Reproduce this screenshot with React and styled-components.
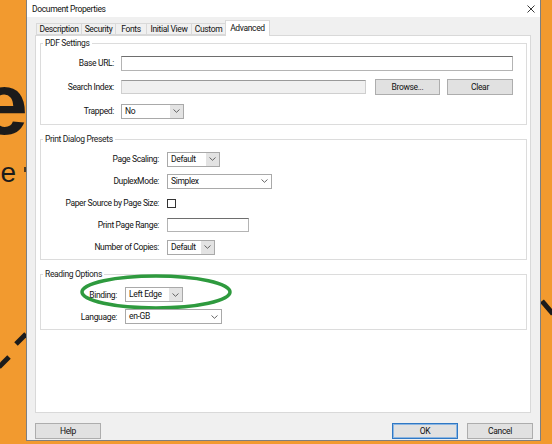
import styled, { createGlobalStyle } from 'styled-components';

const GlobalStyle = createGlobalStyle`
  html, body {
    margin: 0;
    padding: 0;
  }
  body {
    width: 552px;
    height: 444px;
    overflow: hidden;
    background: #f29a2f;
    font-family: Roboto, "Liberation Sans", Arial, sans-serif;
  }
  * {
    box-sizing: border-box;
  }
`;

const Page = styled.div`
  display: flex;
  width: 552px;
  height: 444px;
  background: #f29a2f;
`;

const Side = styled.div`
  width: ${(p) => p.$w}px;
  flex-shrink: 0;
  overflow: hidden;

  svg {
    display: block;
  }
`;

const Dialog = styled.div`
  width: 515px;
  height: 441px;
  flex-shrink: 0;
  display: flex;
  flex-direction: column;
  background: #f0f0f0;
  border: 1px solid #7f7f7f;
  border-top: none;
  font-size: 8.5px;
  letter-spacing: -0.35px;
  color: #111;
`;

const TitleBar = styled.div`
  height: 17px;
  flex-shrink: 0;
  display: flex;
  align-items: center;
  justify-content: space-between;
  padding: 0 5px;
  background: #fff;
`;

const Body = styled.div`
  flex: 1;
  display: flex;
  flex-direction: column;
  padding: 3px 9px 0 8px;
`;

const TabRow = styled.div`
  display: flex;
  align-items: flex-end;
  height: 15px;
  padding-left: 1px;
`;

const Tab = styled.div`
  position: relative;
  z-index: ${(p) => (p.$active ? 1 : 0)};
  width: ${(p) => p.$w + 1}px;
  height: ${(p) => (p.$active ? 16 : 12)}px;
  margin-right: -1px;
  margin-bottom: ${(p) => (p.$active ? -1 : 0)}px;
  display: flex;
  align-items: center;
  justify-content: center;
  white-space: nowrap;
  background: ${(p) => (p.$active ? '#fff' : '#f0f0f0')};
  border: 1px solid #d9d9d9;
  border-bottom: ${(p) => (p.$active ? 'none' : '1px solid #d9d9d9')};
  padding-bottom: ${(p) => (p.$active ? 2 : 0)}px;
`;

const Panel = styled.div`
  flex: 1;
  background: #fff;
  border: 1px solid #d9d9d9;
  padding: 2px 3px 0 4px;
`;

const Group = styled.fieldset`
  margin: 0 0 9px;
  border: 1px solid #dcdcdc;
  padding: ${(p) => p.$pt}px 13px ${(p) => p.$pb}px 0;
  min-inline-size: 0;
  display: flex;
  flex-direction: column;
  gap: ${(p) => p.$gap}px;

  legend {
    padding: 0 2px;
    margin-left: 2px;
    line-height: 10px;
    font-size: 8.5px;
    color: #1a1a1a;
  }
`;

const Row = styled.div`
  position: relative;
  display: flex;
  align-items: center;
  height: ${(p) => p.$h || 16}px;
  gap: ${(p) => p.$gap}px;
`;

const Label = styled.div`
  width: ${(p) => p.$w}px;
  flex-shrink: 0;
  text-align: right;
  white-space: nowrap;
`;

const TextBox = styled.div`
  flex: ${(p) => (p.$w ? '0 0 auto' : '1')};
  width: ${(p) => (p.$w ? `${p.$w}px` : 'auto')};
  height: ${(p) => p.$h || 15}px;
  background: ${(p) => (p.$disabled ? '#f0f0f0' : '#fff')};
  border: 1px solid ${(p) => (p.$disabled ? '#cfcfcf' : '#b4b4b4')};
  border-top-color: ${(p) => (p.$disabled ? '#9a9a9a' : '#6e6e6e')};
`;

const Combo = styled.div`
  width: ${(p) => p.$w}px;
  height: 15px;
  flex-shrink: 0;
  display: flex;
  background: #fff;
  border: 1px solid #a9a9a9;

  span {
    flex: 1;
    padding-left: 3px;
    line-height: 13px;
    white-space: nowrap;
  }
`;

const Arrow = styled.div`
  width: 13px;
  display: flex;
  align-items: center;
  justify-content: center;
  background: ${(p) => (p.$shaded ? '#e3e3e3' : '#fff')};
`;

const CheckBox = styled.div`
  width: 9px;
  height: 9px;
  background: #fff;
  border: 1px solid #333;
`;

const Button = styled.div`
  width: ${(p) => p.$w || 66}px;
  height: 16px;
  flex-shrink: 0;
  display: flex;
  align-items: center;
  justify-content: center;
  background: #e1e1e1;
  border: 1px solid ${(p) => (p.$primary ? '#2f78c4' : '#adadad')};
  box-shadow: ${(p) => (p.$primary ? 'inset 0 0 0 1px #8cb6e2' : 'none')};
`;

const Footer = styled.div`
  display: flex;
  justify-content: space-between;
  padding: 10px 0 1px;
  margin-right: -2px;
`;

const ButtonGroup = styled.div`
  display: flex;
  gap: 9px;
`;

const Highlight = styled.svg`
  position: absolute;
  left: 37px;
  top: -15px;
  pointer-events: none;
  overflow: visible;
`;

const Chevron = () => (
  <svg width="7" height="4" viewBox="0 0 7 4">
    <path d="M0.5 0.5 L3.5 3.3 L6.5 0.5" fill="none" stroke="#555" strokeWidth="0.9" />
  </svg>
);

const Select = ({ w, value, shaded }) => (
  <Combo $w={w}>
    <span>{value}</span>
    <Arrow $shaded={shaded}>
      <Chevron />
    </Arrow>
  </Combo>
);

const tabs = [
  { name: 'Description', w: 45 },
  { name: 'Security', w: 34 },
  { name: 'Fonts', w: 31 },
  { name: 'Initial View', w: 45 },
  { name: 'Custom', w: 34 },
  { name: 'Advanced', w: 44, active: true },
];

const App = () => {
  return (
    <>
      <GlobalStyle />
      <Page>
        <Side $w={26}>
          <svg width="26" height="444" viewBox="0 0 26 444">
            <text
              x="28"
              y="134"
              textAnchor="end"
              fontSize="88"
              fontWeight="700"
              fontFamily="Liberation Sans, sans-serif"
              fill="#1b1b1b"
            >
              e
            </text>
            <text
              x="16"
              y="182"
              textAnchor="end"
              fontSize="28"
              fontFamily="Liberation Sans, sans-serif"
              fill="#1b1b1b"
            >
              ne
            </text>
            <line x1="25" y1="167" x2="25" y2="172" stroke="#1b1b1b" strokeWidth="1.5" />
            <line x1="16" y1="344" x2="26" y2="334" stroke="#1b1b1b" strokeWidth="5" />
            <line x1="-1" y1="367" x2="9" y2="357" stroke="#1b1b1b" strokeWidth="5" />
          </svg>
        </Side>

        <Dialog>
          <TitleBar>
            <span>Document Properties</span>
            <svg width="8" height="8" viewBox="0 0 8 8">
              <path d="M0.5 0.5 L7.5 7.5 M7.5 0.5 L0.5 7.5" stroke="#222" strokeWidth="0.9" />
            </svg>
          </TitleBar>

          <Body>
            <TabRow>
              {tabs.map((t) => (
                <Tab key={t.name} $w={t.w} $active={t.active}>
                  {t.name}
                </Tab>
              ))}
            </TabRow>

            <Panel>
              <Group $pt={7} $pb={5} $gap={8}>
                <legend>PDF Settings</legend>
                <Row $gap={7}>
                  <Label $w={73}>Base URL:</Label>
                  <TextBox />
                </Row>
                <Row $gap={7}>
                  <Label $w={73}>Search Index:</Label>
                  <TextBox $disabled $h={14} />
                  <Button $w={65} style={{ marginLeft: 2 }}>Browse...</Button>
                  <Button>Clear</Button>
                </Row>
                <Row $gap={7}>
                  <Label $w={73}>Trapped:</Label>
                  <Select w={63} value="No" shaded />
                </Row>
              </Group>

              <Group $pt={7} $pb={4} $gap={6}>
                <legend>Print Dialog Presets</legend>
                <Row $gap={8}>
                  <Label $w={118}>Page Scaling:</Label>
                  <Select w={53} value="Default" shaded />
                </Row>
                <Row $gap={8}>
                  <Label $w={118}>DuplexMode:</Label>
                  <Select w={105} value="Simplex" />
                </Row>
                <Row $gap={8}>
                  <Label $w={118}>Paper Source by Page Size:</Label>
                  <CheckBox />
                </Row>
                <Row $gap={8}>
                  <Label $w={118}>Print Page Range:</Label>
                  <TextBox $w={82} $h={14} />
                </Row>
                <Row $gap={8}>
                  <Label $w={118}>Number of Copies:</Label>
                  <Select w={48} value="Default" shaded />
                </Row>
              </Group>

              <Group $pt={8} $pb={5} $gap={7}>
                <legend>Reading Options</legend>
                <Row $gap={8} $h={15}>
                  <Label $w={76}>Binding:</Label>
                  <Select w={58} value="Left Edge" shaded />
                  <Highlight width="156" height="40" viewBox="0 0 156 40">
                    <ellipse cx="78" cy="20" rx="74" ry="16" fill="none" stroke="#2e9a3e" strokeWidth="3.5" />
                  </Highlight>
                </Row>
                <Row $gap={8} $h={15}>
                  <Label $w={76}>Language:</Label>
                  <Select w={97} value="en-GB" />
                </Row>
              </Group>
            </Panel>

            <Footer>
              <Button>Help</Button>
              <ButtonGroup>
                <Button $primary>OK</Button>
                <Button>Cancel</Button>
              </ButtonGroup>
            </Footer>
          </Body>
        </Dialog>

        <Side $w={11}>
          <svg width="11" height="444" viewBox="0 0 11 444">
            <line x1="1" y1="301" x2="12" y2="314" stroke="#1b1b1b" strokeWidth="5" />
          </svg>
        </Side>
      </Page>
    </>
  );
};

export default App;
